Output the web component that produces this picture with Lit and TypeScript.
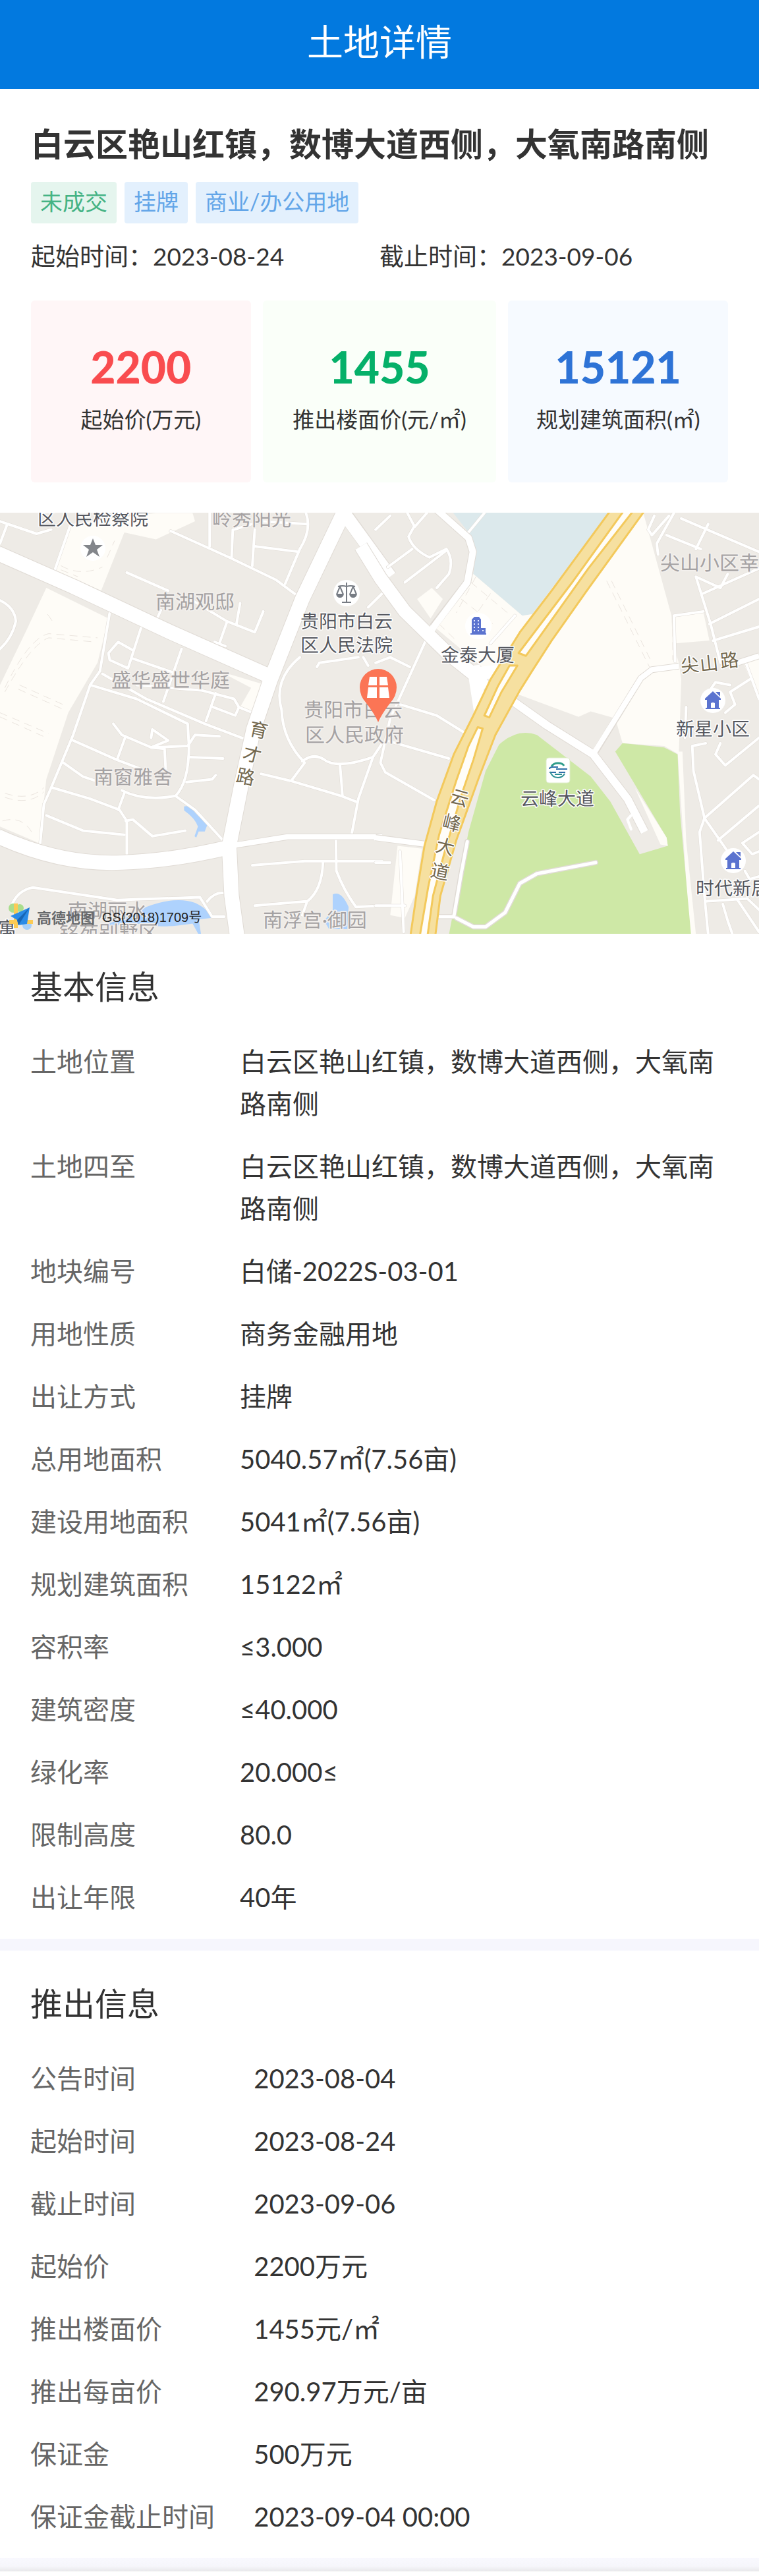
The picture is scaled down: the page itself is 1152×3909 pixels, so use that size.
import { LitElement, html, svg, css } from "lit";
import { customElement, property } from "lit/decorators.js";

interface Row {
  label: string;
  value: string;
}

const ADDRESS = "白云区艳山红镇，数博大道西侧，大氧南路南侧";

const BASIC: Row[] = [
  { label: "土地位置", value: ADDRESS },
  { label: "土地四至", value: ADDRESS },
  { label: "地块编号", value: "白储-2022S-03-01" },
  { label: "用地性质", value: "商务金融用地" },
  { label: "出让方式", value: "挂牌" },
  { label: "总用地面积", value: "5040.57㎡(7.56亩)" },
  { label: "建设用地面积", value: "5041㎡(7.56亩)" },
  { label: "规划建筑面积", value: "15122㎡" },
  { label: "容积率", value: "≤3.000" },
  { label: "建筑密度", value: "≤40.000" },
  { label: "绿化率", value: "20.000≤" },
  { label: "限制高度", value: "80.0" },
  { label: "出让年限", value: "40年" },
];

const LAUNCH: Row[] = [
  { label: "公告时间", value: "2023-08-04" },
  { label: "起始时间", value: "2023-08-24" },
  { label: "截止时间", value: "2023-09-06" },
  { label: "起始价", value: "2200万元" },
  { label: "推出楼面价", value: "1455元/㎡" },
  { label: "推出每亩价", value: "290.97万元/亩" },
  { label: "保证金", value: "500万元" },
  { label: "保证金截止时间", value: "2023-09-04 00:00" },
];

const STATS = [
  { tone: "red", value: "2200", label: "起始价(万元)" },
  { tone: "green", value: "1455", label: "推出楼面价(元/㎡)" },
  { tone: "blue", value: "15121", label: "规划建筑面积(㎡)" },
];

/* Streets of the western half, in that sheet's own units */
const WEST_MINOR = [
  "M0,50 L150,95 L210,80",
  "M30,60 L0,130",
  "M290,60 L225,225",
  "M700,85 L940,180 L1130,260 L1230,325",
  "M860,20 V140 M955,80 L950,180 M1045,80 L1035,210",
  "M960,80 L1070,50 L1260,60 M1045,140 L1225,160",
  "M1255,20 Q1280,80 1230,150 L1170,275",
  "M520,235 L690,300 M780,330 L930,410 L1045,450 L1080,375",
  "M985,345 L970,420 M930,415 L900,490 M880,485 L925,500",
  "M0,335 Q60,360 65,410 Q50,470 0,510",
  "M660,370 L640,410 M580,430 L525,580 L450,550 L445,525 L485,485 L545,515",
  "M545,545 L710,595 M745,510 L670,700",
  "M450,380 L410,590 L370,640 L560,690 L770,780 L775,860 Q775,990 720,1040 Q590,1060 500,1020",
  "M370,640 L300,820 L210,1010 L180,1070 L165,1210",
  "M560,640 L830,660 L960,690 L980,720 L965,750 L875,720 M885,670 L845,770 M980,720 L1050,745",
  "M420,600 L600,690 L840,780 L1020,840",
  "M465,780 L500,820 L620,865 L770,860 L800,820 L900,825",
  "M620,865 L675,870 L680,950 M620,830 L625,800 L690,840 L620,865",
  "M515,825 L480,910 M300,840 L480,910 L600,950",
  "M260,920 L340,970 L390,985 M780,900 L915,905 M765,990 L870,980 L885,965",
  "M215,1010 L370,1050 L490,1090 L520,1130 V1250",
  "M510,1030 L485,1090 M190,1110 L340,1165 L510,1180",
  "M515,1130 L545,1125 L625,1185 L760,1165",
  "M720,1040 L800,1090 L915,1200",
  "M45,1440 Q70,1380 135,1370 L480,1415 L820,1405 L870,1475 L920,1475",
  "M850,1420 Q880,1385 920,1390",
  "M1300,575 L1310,560 L1470,540 M1490,540 L1510,570",
  "M1230,540 Q1120,620 1155,730 Q1160,840 1250,920 L1195,985",
  "M1240,915 Q1290,880 1340,915 Q1400,940 1530,900",
  "M1070,960 L1190,985 L1400,1040 L1460,1060",
  "M1395,930 L1405,1040 M1568,850 L1530,900 L1470,1050 L1440,1190",
  "M1035,1290 L1250,1275 L1568,1275",
  "M1378,1200 L1380,1310 Q1410,1380 1460,1440 L1568,1435",
  "M1325,1280 Q1320,1380 1260,1420 L1240,1470 M1045,1435 L1255,1420",
  "M1510,360 L1568,310",
];

/* Streets of the eastern half */
const EAST_MINOR = [
  "M130,20 L160,70 L210,20 M160,65 L135,105 Q150,150 220,180 L290,150 Q320,190 300,240 L250,290",
  "M0,80 L60,30 M50,215 L150,150 M120,270 L290,155",
  "M375,95 L445,20",
  "M205,480 L60,760 L20,920 L40,955 L240,1055",
  "M100,710 L250,750 L360,810 M45,840 L300,905",
  "M0,560 L60,540 L140,575",
  "M0,1280 H60 M0,1435 H120 M100,1240 L115,1530",
  "M570,390 L470,490",
  "M1140,30 L1115,80 L1130,100 L1200,30 M1220,20 L1150,130 L1155,170",
  "M1190,100 L1330,150 M1250,40 L1568,160 M1360,60 L1310,150",
  "M1310,250 L1370,420 L1410,560 M1310,250 L1410,290 L1440,240 M1568,220 L1340,310",
  "M1365,420 L1568,330 M1380,480 L1568,430",
  "M1220,390 L1225,555 M1220,390 L1340,375 M1510,550 L1568,690",
  "M1530,620 L1450,665 L1470,710 L1430,740 M1450,640 L1390,630 L1350,680",
  "M1350,850 L1295,860 L1300,950 L1345,1120 L1440,1240",
  "M1345,1120 L1545,965 L1568,980 M1400,1200 L1568,1075",
  "M1345,1120 L1325,1170 L1345,1400 L1360,1540",
  "M1410,850 L1390,890 L1430,930 L1568,830",
  "M1568,1170 L1500,1210 L1540,1250 L1568,1240 M1510,1310 L1530,1340 L1568,1330",
  "M1350,1420 L1520,1410 L1568,1450 M1420,1430 L1440,1490 L1460,1540 M1480,1415 L1568,1530",
  "M1270,720 L1265,830",
];

const HOUSE = svg`
  <circle r="19" fill="#fff"/>
  <path fill="#5b73cf" d="M0,-14 L12,-3 V-1 H9 V11 H11 V13 H-11 V11 H-9 V-1 H-12 V-3 Z M4,-13 H11 V-6 Z"/>
  <path fill="#fff" d="M-3,11 V4 Q0,2 3,4 V11 Z"/>`;

@customElement("land-map")
export class LandMap extends LitElement {
  static styles = css`
    :host {
      display: block;
    }
    .map {
      display: block;
      width: 100%;
      height: auto;
    }
    path,
    polygon {
      stroke-linejoin: round;
    }
    .sheet path {
      vector-effect: non-scaling-stroke;
    }
    .block {
      fill: #fefcf7;
    }
    .park {
      fill: #cee8a6;
    }
    .lake {
      fill: #dce9ec;
    }
    .pond {
      fill: #aed2fd;
    }
    .line {
      fill: none;
      stroke-linecap: round;
    }
    .edge {
      fill: none;
      stroke: #e0dbd5;
    }
    .road {
      fill: none;
      stroke: #fff;
    }
    .w4 {
      stroke-width: 4px;
    }
    .w5 {
      stroke-width: 5px;
    }
    .w8 {
      stroke-width: 8px;
    }
    .w10 {
      stroke-width: 10px;
    }
    .w12 {
      stroke-width: 12px;
    }
    .w14 {
      stroke-width: 14px;
    }
    .w20 {
      stroke-width: 20px;
    }
    .w22 {
      stroke-width: 22px;
    }
    .w24 {
      stroke-width: 24px;
    }
    .dash {
      fill: none;
      stroke: #ebe5df;
      stroke-width: 1px;
      stroke-dasharray: 12 8;
    }
    .highway {
      fill: #f6e0a0;
      stroke: #f3c95c;
      stroke-width: 3px;
    }
    .median {
      fill: #fffdf8;
      stroke: #f3c95c;
      stroke-width: 3px;
    }
    text {
      font-family: Lato, "Noto Sans CJK SC", sans-serif;
      dominant-baseline: central;
      paint-order: stroke;
      stroke: #fff;
      stroke-width: 3px;
      stroke-linejoin: round;
    }
    .place {
      font-size: 28px;
      fill: #55575e;
    }
    .area {
      font-size: 30px;
      fill: #a5a2a3;
      stroke: #f4f1ee;
    }
    .street {
      font-size: 28px;
      fill: #74694f;
      text-anchor: middle;
    }
    .brand {
      font-size: 22px;
      font-weight: 700;
      fill: #66686b;
      stroke: none;
    }
    .licence {
      font-family: "Liberation Sans", "Noto Sans CJK SC", sans-serif;
      font-size: 20px;
      fill: #222;
      stroke: none;
    }
  `;

  render() {
    return html`
      <svg class="map" viewBox="0 0 1152 639" role="img" aria-label="地图">
        <rect width="1152" height="639" fill="#eeebe6" />
        <g class="sheet" transform="translate(0,-8) scale(0.37,0.421)">
          <path class="block" d="M190,290 L445,400 L400,560 L280,740 L190,980 L160,1210 L0,1150 V640 L110,440Z" />
          <path class="block" d="M290,60 L640,20 H790 L800,50 L640,115 L510,90 L415,300 L225,225Z" />
          <path class="block" d="M900,590 L1090,640 L1045,745 L985,720 L1030,650Z" />
          <path class="pond" d="M755,1078 Q780,1070 800,1100 L850,1145 L840,1168 H815 L805,1190 L798,1185 L812,1150 Q800,1120 755,1092Z" />
          <path class="pond" d="M600,1440 Q720,1400 800,1425 Q860,1450 865,1480 L815,1485 L825,1540 H815 L790,1500 Q650,1520 590,1500 L400,1510 Q500,1490 600,1440Z" />
          <path class="pond" d="M1365,1395 Q1400,1380 1430,1440 L1425,1520 L1350,1520 L1330,1490 L1365,1450Z" />
          <path class="dash" d="M195,385 L215,410 M20,650 Q120,470 200,455 L400,470 M20,665 Q130,490 200,470 L390,485 M80,640 L270,715 M75,655 L265,730 M0,740 L200,815 M0,755 L190,830 M20,1030 Q120,1060 180,1010 M20,1045 Q120,1075 180,1025 M10,1130 Q90,1110 130,1170 M250,210 Q330,250 420,215 M250,225 L320,250 M440,180 L470,120" />
          ${WEST_MINOR.map((d) => svg`<path class="line edge w5" d=${d}></path>`)}
          ${WEST_MINOR.map((d) => svg`<path class="line road w4" d=${d}></path>`)}
          <path class="edge w24" d="M-10,165 L300,285 L700,450 L1110,610" />
          <path class="edge w24" d="M-10,1185 Q250,1290 500,1280 Q700,1275 940,1225" />
          <path class="edge w24" d="M1420,0 L1240,330 L1110,620 L1040,800 L990,1000 L940,1220 L950,1400 L975,1560" />
          <path class="edge w10" d="M950,1220 L1180,1187 H1568" />
          <path class="edge w22" d="M1420,30 L1600,250" />
          <path class="road w8" d="M930,1222 L1180,1187 H1568" />
          <path class="road w20" d="M1410,20 L1600,250" />
          <path class="road w22" d="M-10,165 L300,285 L700,450 L1110,610" />
          <path class="road w22" d="M-10,1185 Q250,1290 500,1280 Q700,1275 940,1225" />
          <path class="road w22" d="M1420,0 L1240,330 L1110,620 L1040,800 L990,1000 L940,1220 L950,1400 L975,1560" />
        </g>
        <g class="sheet" transform="translate(570,-8) scale(0.3712,0.421)">
          <path class="lake" d="M300,0 H970 L640,385 L600,390 L400,240 L410,160 L380,90Z" />
          <path class="block" d="M400,240 L600,390 L640,385 L560,500 L470,600 L240,430Z" />
          <path class="block" d="M230,290 L275,330 L225,400 L170,330Z" />
          <path class="block" d="M1095,20 L1210,390 L1215,490 L1240,560 L1250,620 L1240,890 L1180,860 L1010,850 L980,760 L880,735 L830,755 L540,660 L700,400Z" />
          <path class="block" d="M1225,390 L1340,375 L1365,480 L1225,490Z M1500,550 L1568,530 V700Z M90,1220 L190,1230 L160,1400 L120,1480 L60,1470Z" />
          <path class="block" d="M1235,880 L1255,880 L1270,1200 L1310,1540 H1285Z" />
          <path class="park" d="M505,855 Q580,795 660,820 L880,970 L960,1060 L1080,1250 L1195,1220 L1190,1190 L980,880 L1010,850 L1180,865 L1235,890 L1245,1100 L1290,1540 H300 L380,1170 L450,950Z" />
          <path class="block" d="M1060,1010 L1190,1190 L1195,1220 L1165,1215Z" />
          <path class="dash" d="M945,265 L1120,575 M965,265 L1130,560 M390,270 L540,380 M350,330 L480,420 M410,250 L330,380 M470,310 L400,400 M260,420 L330,480 M1215,390 V550" />
          ${EAST_MINOR.map((d) => svg`<path class="line edge w5" d=${d}></path>`)}
          ${EAST_MINOR.map((d) => svg`<path class="line road w4" d=${d}></path>`)}
          <path class="edge w10" d="M0,1190 L215,1215" />
          <path class="road w8" d="M-5,1190 L215,1215" />
          <path class="edge w12" d="M240,0 L380,110 L398,160 L375,270 L235,430" />
          <path class="edge w22" d="M-60,140 L20,255 L120,375 L300,530 L400,600 L450,650" />
          <path class="edge w14" d="M500,660 L700,785 L890,890 L1030,1050 L1100,1170" />
          <path class="edge w10" d="M900,880 L1085,615 L1130,585 L1240,572 M1480,560 L1568,535" />
          <path class="road w10" d="M240,0 L380,110 L398,160 L375,270 L230,440" />
          <path class="road w20" d="M-60,140 L20,255 L120,375 L300,530 L400,600 L450,650" />
          <path class="road w20" d="M400,570 L430,740 M400,600 L520,590" />
          <path class="road w12" d="M500,660 L700,785 L890,890 L1030,1050 L1100,1170" />
          <path class="road w8" d="M890,890 L1085,615 L1130,585 L1240,572 M1480,560 L1568,535" />
          <path class="line edge w8" d="M375,1205 L350,1320 L320,1475 H250 M330,1480 L400,1512 H450 L530,1460 L590,1355 L660,1320 L900,1280" />
          <path class="line road w5" d="M375,1205 L350,1320 L320,1475 H250 M330,1480 L400,1512 H450 L530,1460 L590,1355 L660,1320 L900,1280" />
          <path class="line road w4" d="M1045,1110 L1030,1125 L1045,1160" />
          <path class="highway" d="M970,0 L720,300 L590,450 L470,620 L400,750 L320,890 L250,1060 L200,1220 L170,1380 L140,1560 H242 L265,1400 L330,1200 L375,1090 L420,980 L490,820 L590,660 L640,590 L720,480 L860,305 L1110,0Z" />
          <path class="median" d="M1025,0 L800,275 L585,525 L615,535 L700,430 L870,220 L1065,0Z" />
          <path class="median" d="M548,570 L500,645 L445,750 L465,757 L515,665 L580,570Z" />
          <path class="median" d="M418,792 L438,797 L400,910 L350,1040 L280,1250 L235,1400 L210,1560 H178 L215,1370 L260,1180 L330,985 L380,860Z" />
        </g>

        <g text-rendering="geometricPrecision">
          <text class="place" x="57" y="8">区人民检察院</text>
          <text class="area" x="322" y="9">岭秀阳光</text>
          <text class="area" x="236" y="135">南湖观邸</text>
          <text class="area" x="169" y="254">盛华盛世华庭</text>
          <text class="area" x="142" y="401">南窗雅舍</text>
          <text class="area" x="399" y="618">南浮宫·御园</text>
          <text class="area" x="103" y="604">南湖丽水</text>
          <text class="area" x="90" y="637">铭苑别墅区</text>
          <text class="place" x="-3" y="630">寓</text>
          <text class="place" x="456" y="164">贵阳市白云</text>
          <text class="place" x="456" y="200">区人民法院</text>
          <text class="area" x="461" y="299">贵阳市白云</text>
          <text class="area" x="463" y="337">区人民政府</text>
          <text class="place" x="669" y="215">金泰大厦</text>
          <text class="place" x="790" y="433">云峰大道</text>
          <text class="place" x="1026" y="327">新星小区</text>
          <text class="place" x="1056" y="569">时代新居</text>
          <text class="area" x="1002" y="76">尖山小区幸</text>
          ${[
            ["育", 393, 329, 12],
            ["才", 383, 366, 14],
            ["路", 373, 400, 12],
            ["云", 698, 432, 16],
            ["峰", 686, 470, 14],
            ["大", 676, 506, 14],
            ["道", 668, 544, 12],
            ["尖", 1047, 230, -6],
            ["山", 1076, 228, -6],
            ["路", 1107, 223, -6],
          ].map(
            ([ch, x, y, r]) =>
              svg`<text class="street" transform="translate(${x},${y}) rotate(${r})">${ch}</text>`,
          )}
        </g>

        <g transform="translate(141,54)">
          <circle r="19" fill="#fff" />
          <polygon fill="#83868b" points="0,-15 4,-5 15,-5 6,2 10,13 0,6 -10,13 -6,2 -15,-5 -4,-5" />
        </g>
        <g transform="translate(526,122)">
          <circle r="20" fill="#fff" />
          <path d="M0,-16 V14 M-7,14 H7 M-13,-10 Q-6,-12 0,-10 Q6,-12 13,-10 M-10,-10 L-15,2 M-10,-10 L-5,2 M10,-10 L5,2 M10,-10 L15,2" fill="none" stroke="#777c84" stroke-width="2" />
          <path d="M-16,1 H-4 Q-5,7 -10,7 Q-15,7 -16,1Z M4,1 H16 Q15,7 10,7 Q5,7 4,1Z" fill="#777c84" />
        </g>
        <g transform="translate(726,172)">
          <circle r="20" fill="#fff" />
          <path fill="#5b73cf" d="M-10,-10 L-6,-14 H1 L4,-10 V3 H11 V11 H12 V13 H-12 V11 H-10Z" />
          <path fill="#e8ecff" d="M-7,-9 h2 v2 h-2z M-1,-9 h2 v2 h-2z M-7,-4 h2 v2 h-2z M-1,-4 h2 v2 h-2z M-7,1 h2 v2 h-2z M-1,1 h2 v2 h-2z M-7,6 h2 v2 h-2z M-1,6 h2 v2 h-2z M6,6 h2 v2 h-2z" />
        </g>
        <g transform="translate(847,391)">
          <rect x="-18" y="-19" width="36" height="38" rx="4" fill="#fff" stroke="#dfeccb" />
          <path d="M-10,-6 Q-7,-11 0,-11 Q7,-11 9,-7" fill="none" stroke="#2f9d8a" stroke-width="3" />
          <path d="M-13,-2 Q-13,-5 -8,-5 H0 M-3,-2 H14 M-13,3 H-3 M1,3 H11" fill="none" stroke="#2f6fa8" stroke-width="2" />
          <path d="M-12,2 Q-9,11 0,11 Q7,11 10,5 M-5,6 H6" fill="none" stroke="#2c8f93" stroke-width="2" />
        </g>
        <g transform="translate(1082,285)">${HOUSE}</g>
        <g transform="translate(1113,528)">${HOUSE}</g>

        <path fill="#fb7555" d="M574,318 Q569,306 556,289 Q546,278 546,265 A28,28 0 0 1 602,265 Q602,278 592,289 Q579,306 574,318Z" />
        <path fill="#fff" d="M561,249 H572 V262 H559Z M576,249 H587 L589,262 H576Z M559,265 H572 V281 H557Z M576,265 H589 L591,281 H576Z" />

        <g>
          <circle cx="20" cy="600" r="7" fill="#a9dd8d" />
          <circle cx="30" cy="600" r="6" fill="#a9dd8d" />
          <circle cx="41" cy="626" r="7" fill="#a5d0fa" />
          <path d="M24,593 V630 M14,621 H50" stroke="#fbcb55" stroke-width="6" fill="none" />
          <path d="M45,599 L16,612 L26,618 L28,626 L41,624Z" fill="#2a8be6" />
          <path d="M45,599 L26,618 L28,626Z" fill="#1766b5" />
        </g>
        <text class="brand" x="56" y="614">高德地图</text>
        <text class="licence" x="155" y="614">GS(2018)1709号</text>
      </svg>
    `;
  }
}

@customElement("info-section")
export class InfoSection extends LitElement {
  @property() heading = "";
  @property({ attribute: false }) rows: Row[] = [];
  @property({ type: Boolean, reflect: true }) wide = false;

  static styles = css`
    :host {
      display: block;
      padding: 45px 46px 31px;
      color: #333;
    }
    .heading {
      margin: 0 0 47px;
      font-size: 49px;
      line-height: 70px;
      font-weight: 400;
    }
    .rows {
      display: grid;
      gap: 31px;
      margin: 0;
    }
    .row {
      display: grid;
      grid-template-columns: 30% minmax(0, 1fr);
      font-size: 40px;
      line-height: 64px;
    }
    :host([wide]) .row {
      grid-template-columns: 32% minmax(0, 1fr);
    }
    .label {
      color: #666;
    }
    .value {
      margin: 0;
    }
  `;

  render() {
    return html`
      <h2 class="heading">${this.heading}</h2>
      <dl class="rows">
        ${this.rows.map(
          (r) => html`<div class="row"><dt class="label">${r.label}</dt><dd class="value">${r.value}</dd></div>`,
        )}
      </dl>
    `;
  }
}

@customElement("app-root")
export class AppRoot extends LitElement {
  static styles = css`
    :host {
      display: block;
      background: #fff;
      color: #333;
      font-family: Lato, "Noto Sans CJK SC", sans-serif;
    }
    .bar {
      padding: 27px 47px 36px;
      background: #0279df;
      color: #fff;
      text-align: center;
    }
    .bar-title {
      margin: 0;
      font-size: 55px;
      line-height: 72px;
      font-weight: 400;
    }
    .summary {
      padding: 48px 47px 46px;
    }
    .title {
      margin: 0;
      font-size: 49px;
      line-height: 70px;
      font-weight: 700;
    }
    .tags {
      display: flex;
      flex-wrap: wrap;
      gap: 12px;
      margin: 23px 0 20px;
      padding: 0;
      list-style: none;
    }
    .tag {
      padding: 0 14px 4px;
      border-radius: 4px;
      background: #e3f0fd;
      color: #62a5e8;
      font-size: 34px;
      line-height: 59px;
    }
    .tag.open {
      background: #e5f5ee;
      color: #45b384;
    }
    .dates {
      display: grid;
      grid-template-columns: 1fr 1fr;
      font-size: 37px;
      line-height: 60px;
    }
    .stats {
      display: grid;
      grid-template-columns: 47fr 50fr 47fr;
      gap: 18px;
      margin-top: 37px;
    }
    .stat {
      display: flex;
      flex-direction: column;
      align-items: center;
      padding: 61px 0 71px;
      border-radius: 6px;
      white-space: nowrap;
    }
    .stat.red {
      background: #fff6f7;
    }
    .stat.green {
      background: #fafff9;
    }
    .stat.blue {
      background: #f6faff;
    }
    .number {
      font-size: 66px;
      line-height: 80px;
      font-weight: 900;
    }
    .red .number {
      color: #f94c4f;
    }
    .green .number {
      color: #05b069;
    }
    .blue .number {
      color: #2e73d6;
    }
    .caption {
      padding-top: 14px;
      font-size: 33px;
      line-height: 50px;
    }
    .divider {
      height: 18px;
      background: #f6f6fd;
    }
    .foot {
      height: 20px;
      margin-bottom: 7px;
      background: linear-gradient(#f8f8fe 0, #f6f6fb 60%, #e8e8ea 100%);
    }
  `;

  render() {
    return html`
      <header class="bar"><h1 class="bar-title">土地详情</h1></header>
      <main>
        <section class="summary">
          <h2 class="title">${ADDRESS}</h2>
          <ul class="tags">
            <li class="tag open">未成交</li>
            <li class="tag">挂牌</li>
            <li class="tag">商业/办公用地</li>
          </ul>
          <div class="dates">
            <span>起始时间：<time>2023-08-24</time></span>
            <span>截止时间：<time>2023-09-06</time></span>
          </div>
          <div class="stats">
            ${STATS.map(
              (s) => html`<div class="stat ${s.tone}">
                <span class="number">${s.value}</span>
                <span class="caption">${s.label}</span>
              </div>`,
            )}
          </div>
        </section>
        <land-map></land-map>
        <info-section heading="基本信息" .rows=${BASIC}></info-section>
        <div class="divider"></div>
        <info-section wide heading="推出信息" .rows=${LAUNCH}></info-section>
        <div class="foot"></div>
      </main>
    `;
  }
}
